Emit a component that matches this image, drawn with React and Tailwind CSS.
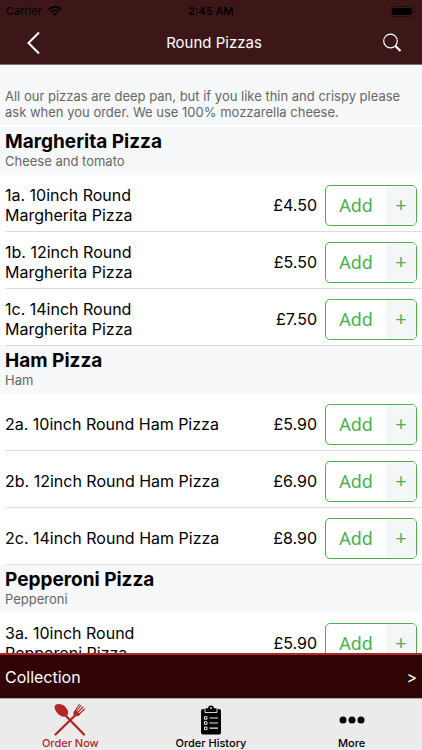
import { useState } from "react";

const sections = [
  {
    title: "Margherita Pizza",
    description: "Cheese and tomato",
    items: [
      { id: "1a", name: "1a. 10inch Round Margherita Pizza", price: "£4.50" },
      { id: "1b", name: "1b. 12inch Round Margherita Pizza", price: "£5.50" },
      { id: "1c", name: "1c. 14inch Round Margherita Pizza", price: "£7.50" },
    ],
  },
  {
    title: "Ham Pizza",
    description: "Ham",
    items: [
      { id: "2a", name: "2a. 10inch Round Ham Pizza", price: "£5.90" },
      { id: "2b", name: "2b. 12inch Round Ham Pizza", price: "£6.90" },
      { id: "2c", name: "2c. 14inch Round Ham Pizza", price: "£8.90" },
    ],
  },
  {
    title: "Pepperoni Pizza",
    description: "Pepperoni",
    items: [
      { id: "3a", name: "3a. 10inch Round Pepperoni Pizza", price: "£5.90" },
    ],
  },
];

function WifiIcon() {
  return (
    <svg width="14" height="10" viewBox="0 0 14 10" aria-hidden="true">
      <g fill="none" stroke="currentColor" strokeWidth="1.9">
        <path d="M0.7 3.6a9 9 0 0 1 12.6 0" />
        <path d="M3 6a5.7 5.7 0 0 1 8 0" />
      </g>
      <path d="M7 10 4.9 7.8a3 3 0 0 1 4.2 0Z" fill="currentColor" />
    </svg>
  );
}

function BatteryIcon() {
  return (
    <svg width="26" height="11" viewBox="0 0 26 11" aria-hidden="true">
      <rect x="0.5" y="0.5" width="22.5" height="10" rx="2.5" fill="none" stroke="#000" strokeOpacity="0.4" />
      <rect x="2" y="2" width="19.5" height="7" rx="1.2" fill="#000" />
      <path d="M24.2 3.8c1.1.4 1.1 3 0 3.4Z" fill="#000" fillOpacity="0.5" />
    </svg>
  );
}

function CutleryIcon() {
  return (
    <svg width="34" height="34" viewBox="0 0 34 34" aria-hidden="true">
      <g stroke="currentColor" strokeLinecap="round" fill="none">
        <path d="M12 12 31 31.5" strokeWidth="2.4" />
        <path d="M2.5 31.5 23 11.5" strokeWidth="2.4" />
        <path d="M23 8.5 28 2.5M24.7 9.5 30 4M26.3 11 31.7 6M22.3 7.5 26.3 1.5" strokeWidth="1.1" />
      </g>
      <path d="M2.2 2.2C5 0 10 1.3 12.7 4.3c2.7 3 3.2 6.4 1.5 8.4-2.2 1.8-6 1.3-8.8-1.4C2.200 8 .800 4.300 2.200 2.200Z" fill="currentColor" />
      <path d="m22.500 6.800 4.800 4.700c-1.500 1.800-3.500 2.300-5.500 1.300l-1.300-1.200c-1-1.800.4-3.500 2-4.800Z" fill="currentColor" />
    </svg>
  );
}

function ClipboardIcon() {
  return (
    <svg width="20" height="30" viewBox="0 0 20 30" aria-hidden="true">
      <path
        d="M2 4h2.500V3.200h2.700a2.800 2.800 0 0 1 5.600 0h2.700V4H18a2 2 0 0 1 2 2v21.500a2 2 0 0 1-2 2H2a2 2 0 0 1-2-2V6a2 2 0 0 1 2-2Z"
        fill="currentColor"
      />
      <g fill="none" stroke="#ebebeb">
        <path d="M4 4v3.500h12V4" strokeWidth="0.900" />
        <path d="M8.500 13h8.500M8.500 18h8.500M8.500 23.200h8.500" strokeWidth="1.200" />
        <path d="M3.500 11.700H6v2.500H3.500ZM3.500 16.800H6v2.500H3.500ZM3.500 22H6v2.500H3.500Z" strokeWidth="1" />
      </g>
      <circle cx="10" cy="3" r="1" fill="#ebebeb" />
    </svg>
  );
}

function MoreIcon() {
  return (
    <svg width="26" height="8" viewBox="0 0 26 8" fill="currentColor" aria-hidden="true">
      <circle cx="4" cy="4" r="3.500" />
      <circle cx="13" cy="4" r="3.500" />
      <circle cx="22" cy="4" r="3.500" />
    </svg>
  );
}

function MenuItem({ item }) {
  return (
    <li className="ml-[5px] flex h-[57px] items-center border-b border-[#dcdcdc] pt-1 pr-[5px]">
      <div className="min-w-0 flex-1">
        <p className={item.name.length > 28 ? "max-w-36 text-base leading-5" : "text-base leading-5"}>
          {item.name}
        </p>
      </div>
      <span className="mr-2 text-base leading-5">{item.price}</span>
      <button
        type="button"
        aria-label={`Add ${item.name}`}
        className="flex h-[41px] w-[92px] shrink-0 overflow-hidden rounded-[5px] border border-[#4caf50] font-['Noto_Sans','Open_Sans',sans-serif] text-[#4caf50]"
      >
        <span className="flex h-full flex-1 items-center justify-center text-lg">Add</span>
        <span className="flex h-full w-[30px] items-center justify-center bg-[#f5f6f8] text-xl">+</span>
      </button>
    </li>
  );
}

const tabs = [
  { id: "order", label: "Order Now", icon: <CutleryIcon /> },
  { id: "history", label: "Order History", icon: <ClipboardIcon /> },
  { id: "more", label: "More", icon: <MoreIcon /> },
];

export default function App() {
  const [activeTab, setActiveTab] = useState("order");

  return (
    <div className="flex h-screen flex-col overflow-hidden bg-white font-['Inter',sans-serif] text-black">
      {/* Header */}
      <header className="shrink-0 border-b border-[#8a6f70] bg-[#3d1718]">
        <div className="grid h-[22px] grid-cols-3 items-center px-1.5 text-[11px] leading-4">
          <div className="flex items-center gap-1.5">
            <span>Carrier</span>
            <WifiIcon />
          </div>
          <span className="text-center font-semibold">2:45 AM</span>
          <span className="flex justify-end">
            <BatteryIcon />
          </span>
        </div>
        <div className="grid h-[42px] grid-cols-[66px_1fr_60px] items-center text-white">
          <button type="button" aria-label="Back" className="flex justify-center">
            <svg width="14" height="24" viewBox="0 0 14 24" fill="none" stroke="currentColor" strokeWidth="2" aria-hidden="true">
              <path d="M13 1.500 2.500 12 13 22.500" />
            </svg>
          </button>
          <h1 className="text-center text-[15px]">Round Pizzas</h1>
          <button type="button" aria-label="Search" className="flex justify-center">
            <svg width="20" height="20" viewBox="0 0 20 20" fill="none" stroke="currentColor" aria-hidden="true">
              <circle cx="8.500" cy="8" r="6.800" strokeWidth="1.200" />
              <path d="m13.500 13 5 5" strokeWidth="2.200" />
            </svg>
          </button>
        </div>
      </header>

      {/* Menu */}
      <main className="min-h-0 flex-1 overflow-y-auto [scrollbar-width:none]">
        <p className="border-b-2 border-white bg-[#f7f8fa] px-[5px] pt-[23px] pb-[5px] text-[13px] leading-4 text-[#666666]">
          All our pizzas are deep pan, but if you like thin and crispy please ask when you order. We use 100% mozzarella cheese.
        </p>
        {sections.map((section) => (
          <section key={section.title}>
            <div className="h-12 bg-[#f7f8fa] px-[5px] pt-1">
              <h2 className="text-[19px] leading-[22px] font-bold">{section.title}</h2>
              <p className="text-[13px] leading-4 text-[#666666]">{section.description}</p>
            </div>
            <ul>
              {section.items.map((item) => (
                <MenuItem key={item.id} item={item} />
              ))}
            </ul>
          </section>
        ))}
      </main>

      {/* Basket bar */}
      <button
        type="button"
        className="flex h-[45px] shrink-0 items-center justify-between border-t-2 border-[#b3262a] bg-[#300305] px-[5px] text-base text-white"
      >
        <span>Collection</span>
        <span>&gt;</span>
      </button>

      {/* Tabs */}
      <nav className="grid h-[52px] shrink-0 grid-cols-3 border-t border-[#b5a5a5] bg-[#ebebeb]">
        {tabs.map((tab) => (
          <button
            key={tab.id}
            type="button"
            onClick={() => setActiveTab(tab.id)}
            className={`flex flex-col items-center text-[11px] leading-3 font-medium ${
              activeTab === tab.id ? "text-[#b3262a]" : "text-black"
            }`}
          >
            <span className="flex h-[38px] items-center pt-1">{tab.icon}</span>
            {tab.label}
          </button>
        ))}
      </nav>
    </div>
  );
}
